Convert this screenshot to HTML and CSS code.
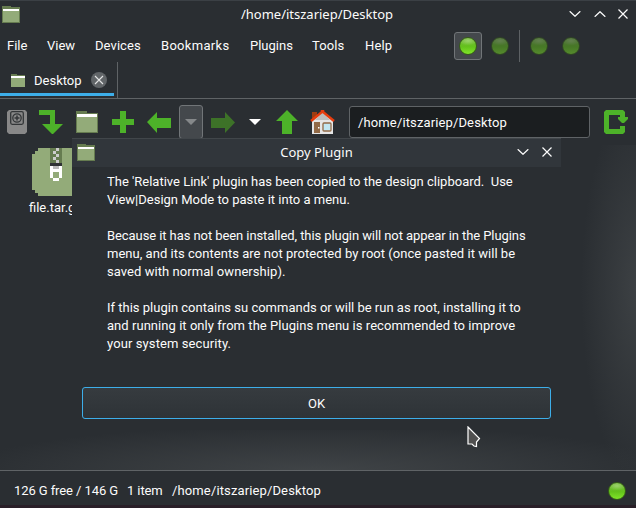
FILE: index.html
```html
<!DOCTYPE html>
<html lang="en">
<head>
<meta charset="utf-8">
<title>/home/itszariep/Desktop</title>
<link rel="stylesheet" href="styles.css">
</head>
<body>
<svg width="0" height="0" class="defs">
  <defs>
    <symbol id="folder" viewBox="0 0 18 18">
      <path fill="#667c50" d="M0 0h9v1h9v16H0z"/>
      <path fill="#93ab79" d="M1 4h16v12H1z"/>
      <path fill="#fff" d="M1 3h16v2H1z"/>
    </symbol>
    <symbol id="down" viewBox="0 0 12 6"><path d="M.7.2 6 5.300 11.300.2" fill="none" stroke="#fcfcfc" stroke-width="1.2"/></symbol>
    <symbol id="cross" viewBox="0 0 10 10"><path d="M.5.5l9 9M9.5.5l-9 9" fill="none" stroke="#fcfcfc" stroke-width="1.2"/></symbol>
  </defs>
</svg>
<div class="window">
  <header class="titlebar">
    <svg class="app-icon"><use href="#folder"/></svg>
    <span class="title">/home/itszariep/Desktop</span>
    <div class="controls">
      <svg width="12" height="6"><use href="#down"/></svg>
      <svg width="12" height="6" class="flip"><use href="#down"/></svg>
      <svg width="10" height="10"><use href="#cross"/></svg>
    </div>
  </header>
  <nav class="menubar">
    <span class="m-file">File</span><span class="m-view">View</span><span class="m-devices">Devices</span><span class="m-bookmarks">Bookmarks</span><span class="m-plugins">Plugins</span><span class="m-tools">Tools</span><span class="m-help">Help</span>
    <div class="panels">
      <div class="panel-btn active"><i class="orb"></i></div>
      <div class="panel-btn"><i class="orb dim"></i></div>
      <div class="sep"></div>
      <div class="panel-btn"><i class="orb dim"></i></div>
      <div class="panel-btn"><i class="orb dim"></i></div>
    </div>
  </nav>
  <div class="tabs">
    <div class="tab">
      <svg class="tab-icon" viewBox="0 0 14 13"><path fill="#667c50" d="M0 0h6v1h8v12H0z"/><path fill="#93ab79" d="M0 3h14v10H0z"/><path fill="#fff" d="M0 2h14v2H0z"/></svg>
      <span>Desktop</span>
      <svg class="tab-close" viewBox="0 0 16 16"><circle cx="8" cy="8" r="8" fill="#616568"/><path d="M4 4l8 8M12 4l-8 8" stroke="#e4e5e5" stroke-width="1.1"/></svg>
    </div>
  </div>
  <div class="toolbar">
    <svg width="20" height="24"><path fill="#888" d="M2 0h16l2 2v20l-2 2H2l-2-2V2z"/><rect x="3.700" y="1.700" width="12.600" height="12.600" rx="1.500" fill="none" stroke="#333638" stroke-width="1.300"/><circle cx="10" cy="8" r="4.200" fill="none" stroke="#333638" stroke-width="1.300"/><path stroke="#333638" stroke-width="1.500" d="M10 5.500v5M7.500 8h5"/></svg>
    <svg width="24" height="24"><path fill="#4db229" d="M0 0h16v14h8L14 24h-1L3 14h8V5H0z"/></svg>
    <svg width="22" height="22" viewBox="0 0 22 22"><path fill="#667c50" d="M0 0h11v2h11v20H0z"/><path fill="#93ab79" d="M1 6h20v15H1z"/><path fill="#fff" d="M1 3h20v3H1z"/></svg>
    <svg width="22" height="22"><path fill="#4db229" d="M8 0h6v8h8v6h-8v8H8v-8H0V8h8z"/></svg>
    <svg width="24" height="21"><path fill="#4db229" d="M0 10 10 0v6h14v10H10v5z"/></svg>
    <div class="history"><svg width="12" height="6"><path fill="#85888a" d="M0 0h12L6 6z"/></svg></div>
    <svg width="24" height="21"><path fill="#3d7228" d="M24 10.500 14 0v6H0v10h14v5z"/></svg>
    <svg width="12" height="6"><path fill="#fff" d="M0 0h12L6 6z"/></svg>
    <svg width="22" height="24"><path fill="#4db229" d="M11 0 22 11h-6v13H6V11H0z"/></svg>
    <svg width="25" height="24" viewBox="0 0 25 24"><path fill="#e6e6e6" d="M2 10 12.500 2 23 10v14H2z"/><path fill="#bdbdbd" d="M5 10 12 3h1l7 7z"/><path fill="#9e3d13" d="M2 2h5v5L2 10z"/><path fill="none" stroke="#e63c0e" stroke-width="2.500" d="M1 11 12 2V1h1v1l11 9"/><path fill="#926a47" d="M4 12h6v11H4z"/><path fill="#fff" d="M8 17h1.500v1.500H8z"/><rect x="13" y="13" width="8" height="8" rx="1" fill="#c2e7f2" stroke="#926a47" stroke-width="1.300"/></svg>
    <div class="address">/home/itszariep/Desktop</div>
    <svg class="refresh" width="24" height="24"><path fill="#4db229" d="M2 0h17l2 2v5h3v2l-4 4h-2l-4-4V7h2V5H5v14h11v-3h5v6l-2 2H2l-2-2V2z"/></svg>
  </div>
  <main class="files">
    <div class="file">
      <svg width="48" height="48" shape-rendering="crispEdges"><path fill="#93ab79" d="M6 0h42v48H6v-3H3v-3H0V6h3V3h3z"/><path fill="#667c50" d="M18 0h12v15H18z"/><path fill="#ccc" d="M24 0h3v3h-3zM21 3h3v3h-3zM24 6h3v3h-3zM21 9h3v3h-3zM24 12h3v3h-3z"/><path fill="#303335" d="M18 15h12v3H18z"/><path fill="#fff" fill-rule="evenodd" d="M18 18h12v12h-3v3h-6v-3h-3zM21 24v6h6v-6z"/><path fill="#bbb" d="M21 18h6v3h-6z"/></svg>
      <span>file.tar.gz</span>
    </div>
  </main>
  <footer class="status"><span class="space">126 G free / 146 G</span><span class="count">1 item</span><span class="path">/home/itszariep/Desktop</span><i class="orb"></i></footer>
</div>
<section class="dialog">
  <header class="dialog-title">
    <svg class="app-icon"><use href="#folder"/></svg>
    <span class="title">Copy Plugin</span>
    <div class="controls">
      <svg width="12" height="6"><use href="#down"/></svg>
      <svg width="10" height="10"><use href="#cross"/></svg>
    </div>
  </header>
  <div class="message"><p><span class="l1">The 'Relative Link' plugin has been copied to the design clipboard.  Use</span>
<span class="l2">View|Design Mode to paste it into a menu.</span></p><p><span class="l3">Because it has not been installed, this plugin will not appear in the Plugins</span>
<span class="l4">menu, and its contents are not protected by root (once pasted it will be</span>
<span class="l5">saved with normal ownership).</span></p><p><span class="l6">If this plugin contains su commands or will be run as root, installing it to</span>
<span class="l7">and running it only from the Plugins menu is recommended to improve</span>
<span class="l8">your system security.</span></p></div>
  <button class="ok">OK</button>
</section>
<svg class="cursor" width="14" height="22"><path fill="#505050" stroke="#fff" stroke-width="1.200" d="M1 1 12.500 12.500 9.500 16v4.500L7 20l-2-2H1z"/></svg>
</body>
</html>
```
FILE: styles.css
```css
* { box-sizing: border-box; }
body { margin: 0; background: #2a2e32; color: #fcfcfc; font: 13px/18px Roboto, sans-serif; overflow: hidden; }
svg { display: block; flex: none; }
.defs { position: absolute; }
.window { width: 636px; height: 508px; display: flex; flex-direction: column; border-top: 1px solid #3b4045; border-bottom: 3px solid #291f28; }
.titlebar { height: 28px; flex: none; display: grid; grid-template-columns: 63px 1fr 67px; align-items: center; padding: 0 0 0 2px; }
.titlebar .title { position: relative; top: -1px; }
.app-icon { width: 18px; height: 18px; }
.title { font-family: "Noto Sans", sans-serif; text-align: center; white-space: nowrap; }
.controls { display: flex; align-items: center; gap: 12px; margin-top: -2px; }
.titlebar .controls { gap: 12.5px; }
.flip { transform: rotate(180deg); }
.menubar { height: 33px; flex: none; display: flex; align-items: center; padding-left: 7px; }
.menubar span { white-space: nowrap; }
.m-file { width: 40px; }
.m-view { width: 48px; }
.m-devices { width: 66px; letter-spacing: .08px; }
.m-bookmarks { width: 89px; letter-spacing: .3px; }
.m-plugins { width: 62px; }
.m-tools { width: 53px; letter-spacing: .1px; }
.m-help { width: 30px; letter-spacing: .15px; }
.panels { display: flex; align-items: center; margin-left: auto; margin-right: 47px; }
.panel-btn { width: 28px; height: 28px; margin-right: 4px; display: grid; place-items: center; border-radius: 3px; }
.panel-btn.active { background: #44484c; border: 1px solid #717578; }
.sep { width: 1px; height: 32px; background: #5d6164; margin: 0 5px 0 1px; }
.orb { display: block; width: 18px; height: 18px; border-radius: 50%; border: 1px solid #355d17; background: radial-gradient(ellipse 55% 28% at 50% 18%, #c0e79999, #b8e98a22), linear-gradient(#6aae33, #57bc0a 55%, #78e51a); }
.dim { opacity: .5; }
.tabs { height: 37px; flex: none; border-bottom: 1px solid #5f6366; display: flex; }
.tab { width: 118px; height: 36px; border-right: 1px solid #5f6366; display: flex; align-items: center; padding: 0 10px 0 11px; background: linear-gradient(#3daee9, #3daee9) 0 31px / 114px 3px no-repeat; }
.tab > span { padding-top: 1px; }
.tab-icon { width: 14px; height: 13px; margin-right: 9px; }
.tab-close { width: 16px; height: 16px; margin-left: auto; }
.toolbar { height: 46px; flex: none; display: flex; align-items: center; padding-left: 7px; }
.toolbar > :nth-child(2) { margin-left: 12px; }
.toolbar > :nth-child(3) { margin-left: 13px; }
.toolbar > :nth-child(4) { margin-left: 14px; }
.toolbar > :nth-child(5) { margin-left: 13px; }
.history { width: 24px; height: 34px; margin: 0 8px; border: 1px solid #717578; border-radius: 3px; background: #44484c; display: grid; place-items: center; }
.toolbar > :nth-child(8) { margin-left: 14px; }
.toolbar > :nth-child(9) { margin-left: 15px; }
.toolbar > :nth-child(10) { margin-left: 12px; }
.address { width: 241px; height: 32px; margin-left: 14px; border: 1px solid #5f6366; border-radius: 3px; background: #1b1e20; padding: 7px 8px 5px; letter-spacing: .13px; }
.refresh { margin-left: 14px; }
.files { flex: 1; padding: 3px 0 0 27px; background: radial-gradient(ellipse 57px 190px at 638px 144px, #3d4144, #2a2e3200), radial-gradient(ellipse 360px 46px at 318px 326px, #404447, #2a2e3200); }
.file { width: 60px; }
.file svg { margin-left: 5px; margin-bottom: 3px; }
.file span { white-space: nowrap; margin-left: 2px; }
.status { height: 35px; flex: none; display: flex; align-items: center; padding: 5px 10px 0 14px; border-top: 1px solid #5f6366; }
.space { width: 113px; letter-spacing: -.09px; white-space: nowrap; }
.count { width: 45px; letter-spacing: -.1px; }
.path { letter-spacing: .13px; }
.status .orb { margin-left: auto; }
.dialog { position: absolute; left: 72px; top: 138px; width: 489px; height: 292px; background: #2a2e32; }
.dialog-title { height: 29px; background: #31363b; border-top: 1px solid #41464a; display: grid; grid-template-columns: 39px 1fr 44px; align-items: center; padding-left: 5px; }
.dialog-title .app-icon { margin-top: -1px; }
.dialog-title .title { position: relative; top: -1px; }
.dialog-title .controls { gap: 13px; margin-top: -3px; }
.message { padding: 6px 0 0 35px; white-space: pre; }
.message p { margin: 0 0 18px; }
.l3 { letter-spacing: -.08px; }
.l4 { letter-spacing: .03px; }
.l5 { letter-spacing: .06px; }
.l7 { letter-spacing: .045px; }
.l8 { letter-spacing: .1px; }
.ok { display: block; width: 469px; height: 32px; margin: 34px 0 0 10px; padding: 1px 0 0; border: 1px solid #3daee9; border-radius: 3px; background: linear-gradient(#363b3f, #2e3337); color: #fcfcfc; font: 13px/18px Roboto, sans-serif; }
.cursor { position: absolute; left: 467px; top: 426px; }
```
